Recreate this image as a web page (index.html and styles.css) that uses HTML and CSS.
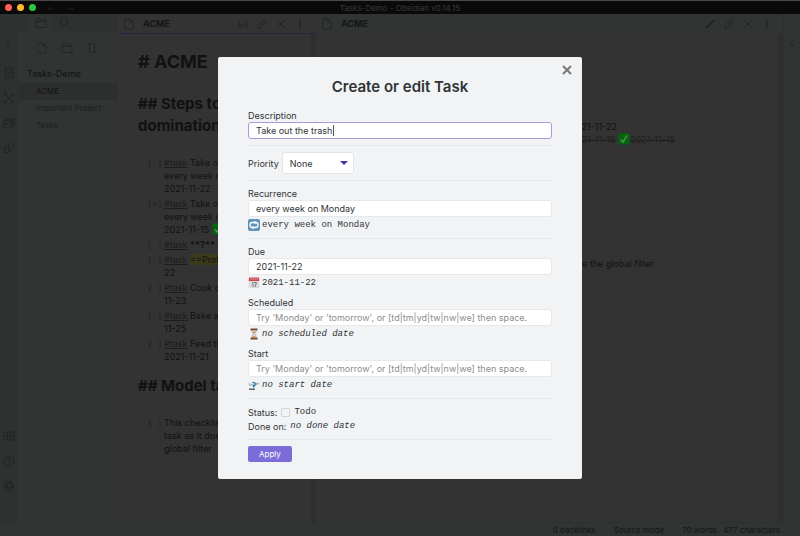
FILE: index.html
```html
<!DOCTYPE html>
<html lang="en">
  <head>
    <meta charset="UTF-8" />
    <meta name="viewport" content="width=device-width, initial-scale=1.0" />
    <title>Tasks-Demo - Obsidian v0.14.15</title>
    <link rel="stylesheet" href="styles.css">
  </head>
  <body>
    <!-- Shared icon shapes -->
    <svg class="sprite" aria-hidden="true">
      <symbol id="i-file" viewBox="0 0 12 12"><path d="M2 1h5l3 3v7H2zM7 1v3h3" /></symbol>
      <symbol id="i-folder" viewBox="0 0 12 12"><path d="M1 10.5v-9h3.5l1 1.5H11v7.500zM1 4.500h10" /></symbol>
      <symbol id="i-search" viewBox="0 0 12 12"><circle cx="5" cy="5" r="3.5" /><path d="M7.500 7.500L11 11" /></symbol>
      <symbol id="i-sort" viewBox="0 0 12 12"><path d="M3.500 11V1M1.500 3l2-2 2 2M8.500 1v10M6.500 9l2 2 2-2" /></symbol>
      <symbol id="i-glasses" viewBox="0 0 12 12"><path d="M1.500 7l1.500-4M10.500 7L9 3M5 7.500q1-1 2 0" /><circle cx="3" cy="8" r="1.800" /><circle cx="9" cy="8" r="1.800" /></symbol>
      <symbol id="i-pencil" viewBox="0 0 12 12"><path d="M2 10l.7-1.800L9.500 2l.7.7L4 9.300z" fill="currentColor" /></symbol>
      <symbol id="i-link" viewBox="0 0 12 12"><path d="M5 7l3-3M6 3l2-1.500q2-.5 2.500 1.500L8.500 6.500 6.500 7M6 9l-2 1.500q-2 .5-2.500-1.500L3.500 5.500 5.500 5" /></symbol>
      <symbol id="i-close" viewBox="0 0 12 12"><path d="M2 2l8 8M10 2l-8 8" /></symbol>
      <symbol id="i-dots" viewBox="0 0 12 12"><path d="M6 1.500v2M6 5v2M6 8.500v2" stroke-width="1.800" /></symbol>
      <symbol id="i-chevron" viewBox="0 0 12 12"><path d="M8 1.500L3.500 6 8 10.500" /></symbol>
      <symbol id="i-switch" viewBox="0 0 12 12"><path d="M2 1h8v10H2zM4 3.500h6M4 6h6M4 8.500h6M1 3.500h2M1 8.500h2" /></symbol>
      <symbol id="i-graph" viewBox="0 0 12 12"><path d="M2 2l4 4 4-3M6 6l-4 4M6 6l4 4" /><circle cx="2" cy="2" r="1" /><circle cx="10" cy="3" r="1" /><circle cx="2" cy="10" r="1" /><circle cx="10" cy="10" r="1" /></symbol>
      <symbol id="i-cards" viewBox="0 0 12 12"><path d="M1 4h8v7H1zM3 4V2h8v6.500H9M1 6.500h8" /></symbol>
      <symbol id="i-dice" viewBox="0 0 12 12"><path d="M1 5l5-1 1 6-5 1zM5 3.500L8 1l3 3-3.500 4M3.500 6.500v2M5.500 6v2" /></symbol>
      <symbol id="i-vault" viewBox="0 0 12 12"><path d="M1 2h10v8H1zM4.500 2v8M7.500 2v8M1 6h10" /></symbol>
      <symbol id="i-help" viewBox="0 0 12 12"><circle cx="6" cy="6" r="5" /><path d="M4.500 4.800q0-1.500 1.500-1.500t1.500 1.300Q7.500 5.500 6 6.300V7M6 8.300v1" /></symbol>
      <symbol id="i-gear" viewBox="0 0 12 12"><circle cx="6" cy="6" r="4" stroke-width="2" stroke-dasharray="2.200 1" /><circle cx="6" cy="6" r="2" /></symbol>
      <symbol id="i-done" viewBox="0 0 12 12"><rect x=".5" y=".5" width="11" height="11" rx="1" fill="#05650d" stroke="none" /><path d="M3 6.500l2 2.500 4-6.500" stroke="#5e8b62" stroke-width="1.400" /></symbol>
    </svg>

    <div class="app">
      <header class="titlebar">
        <span class="light red"></span>
        <span class="light yellow"></span>
        <span class="light green"></span>
        <span class="nav">←</span>
        <span class="nav">→</span>
        <span class="window-title">Tasks-Demo - Obsidian v0.14.15</span>
      </header>

      <div class="workspace">
        <nav class="ribbon">
          <svg class="icon"><use href="#i-chevron" /></svg>
          <svg class="icon first"><use href="#i-switch" /></svg>
          <svg class="icon"><use href="#i-graph" /></svg>
          <svg class="icon"><use href="#i-cards" /></svg>
          <svg class="icon"><use href="#i-dice" /></svg>
          <svg class="icon bottom"><use href="#i-vault" /></svg>
          <svg class="icon"><use href="#i-help" /></svg>
          <svg class="icon"><use href="#i-gear" /></svg>
        </nav>

        <aside class="sidebar">
          <div class="tabs">
            <span class="tab active"><svg class="icon"><use href="#i-folder" /></svg></span>
            <span class="tab"><svg class="icon"><use href="#i-search" /></svg></span>
          </div>
          <div class="file-actions">
            <svg class="icon"><use href="#i-file" /></svg>
            <svg class="icon"><use href="#i-folder" /></svg>
            <svg class="icon"><use href="#i-sort" /></svg>
          </div>
          <div class="vault-name">Tasks-Demo</div>
          <ul class="files">
            <li class="active">ACME</li>
            <li>Important Project</li>
            <li>Tasks</li>
          </ul>
        </aside>

        <section class="pane source focused">
          <div class="pane-header">
            <svg class="icon"><use href="#i-file" /></svg>
            <span class="pane-title">ACME</span>
            <svg class="icon"><use href="#i-glasses" /></svg>
            <svg class="icon"><use href="#i-link" /></svg>
            <svg class="icon"><use href="#i-close" /></svg>
            <svg class="icon"><use href="#i-dots" /></svg>
          </div>
          <div class="pane-body">
            <h1># ACME</h1>
            <h2>## Steps to<br>domination</h2>
            <ul class="tasks">
              <li><code>- [ ]</code><span><a href="#task">#task</a> Take out<br>every week on<br>2021-11-22</span></li>
              <li><code>- [x]</code><span><a href="#task">#task</a> Take out<br>every week on<br>2021-11-15 <svg class="done"><use href="#i-done" /></svg></span></li>
              <li><code>- [ ]</code><span><a href="#task">#task</a> <b>**?**</b></span></li>
              <li><code>- [ ]</code><span><a href="#task">#task</a> <mark>==Profit==</mark><br>22</span></li>
              <li><code>- [ ]</code><span><a href="#task">#task</a> Cook dinner<br>11-23</span></li>
              <li><code>- [ ]</code><span><a href="#task">#task</a> Bake a cake<br>11-25</span></li>
              <li><code>- [ ]</code><span><a href="#task">#task</a> Feed the cat<br>2021-11-21</span></li>
            </ul>
            <h2>## Model tasks</h2>
            <ul class="tasks">
              <li><code>- [ ]</code><span>This checklist<br>task as it does<br>global filter</span></li>
            </ul>
          </div>
        </section>

        <section class="pane preview">
          <div class="pane-header">
            <svg class="icon"><use href="#i-file" /></svg>
            <span class="pane-title">ACME</span>
            <svg class="icon"><use href="#i-pencil" /></svg>
            <svg class="icon"><use href="#i-link" /></svg>
            <svg class="icon"><use href="#i-close" /></svg>
            <svg class="icon"><use href="#i-dots" /></svg>
          </div>
          <div class="pane-body">
            <p>#task Take out the trash, every week on Monday, 2021-11-22</p>
            <p class="completed"><s>#task Take out the trash, every week on Monday, 2021-11-15</s> <svg class="done"><use href="#i-done" /></svg><s>2021-11-15</s></p>
            <p class="note">This checklist item is not a task, as it does not include the global filter</p>
          </div>
        </section>

        <nav class="ribbon right">
          <svg class="icon"><use href="#i-chevron" /></svg>
        </nav>
      </div>

      <footer class="status-bar">
        <span>0 backlinks</span>
        <span>Source mode</span>
        <span class="counts"><span>70 words</span><span>477 characters</span></span>
      </footer>
    </div>

    <div class="modal-container">
      <form class="modal" role="dialog" aria-labelledby="modalTitle">
        <button type="button" class="modal-close" aria-label="Close">
          <svg class="icon"><use href="#i-close" /></svg>
        </button>
        <h2 class="modal-title" id="modalTitle">Create or edit Task</h2>

        <div class="field">
          <label for="description">Description</label>
          <div class="text-box">
            <input type="text" id="description" class="focused" value="Take out the trash" />
            <span class="caret"></span>
          </div>
        </div>
        <hr />
        <div class="inline-field">
          <label for="priority">Priority</label>
          <span class="dropdown">
            <select id="priority">
              <option>None</option>
              <option>Low</option>
              <option>Medium</option>
              <option>High</option>
            </select>
          </span>
        </div>
        <hr />
        <div class="field">
          <label for="recurrence">Recurrence</label>
          <input type="text" id="recurrence" value="every week on Monday" />
          <div class="parsed">
            <svg class="emoji" viewBox="0 0 12 12">
              <rect width="12" height="12" rx="2" fill="#5f93b8" />
              <path d="M8 3.500H4Q2 3.500 2 6t2 2.500M4 8.500h4q2 0 2-2.500T8 3.500" fill="none" stroke="#fff" stroke-width="1.300" />
              <path d="M6.500 1.800v3.400L9 3.500zM5.500 6.800v3.400L3 8.500z" fill="#fff" />
            </svg>
            <code>every week on Monday</code>
          </div>
        </div>
        <hr />
        <div class="field">
          <label for="due">Due</label>
          <input type="text" id="due" value="2021-11-22" />
          <div class="parsed">
            <svg class="emoji" viewBox="0 0 12 12">
              <path d="M1 1h10l.5 10H.5z" fill="#dcdadb" />
              <path d="M1 .5h10l.3 3.500H.7z" fill="#cf4550" />
              <path d="M3 1v2M5 1v2M7 1v2M9 1v2" stroke="#f0b9bd" stroke-width=".6" />
              <path d="M4 6l1-.7V10M6 5.500h2.500L7 10" fill="none" stroke="#77787c" />
            </svg>
            <code>2021-11-22</code>
          </div>
        </div>
        <div class="field">
          <label for="scheduled">Scheduled</label>
          <input type="text" id="scheduled" placeholder="Try 'Monday' or 'tomorrow', or [td|tm|yd|tw|nw|we] then space." />
          <div class="parsed">
            <svg class="emoji" viewBox="0 0 12 12">
              <path d="M3.500 2h5q0 2.500-1.800 4Q8.500 7.500 8.500 10h-5q0-2.500 1.800-4Q3.500 4.500 3.500 2z" fill="#d9dde0" stroke="#9a8c86" stroke-width=".5" />
              <path d="M4.200 3.500h3.600L6 6zM4 10q.5-2 2-2.500 1.500.5 2 2.500z" fill="#d69a55" />
              <path d="M2.500.5h7v1.700h-7zM2.500 9.800h7v1.700h-7z" fill="#7b4535" />
            </svg>
            <code><em>no scheduled date</em></code>
          </div>
        </div>
        <div class="field">
          <label for="start">Start</label>
          <input type="text" id="start" placeholder="Try 'Monday' or 'tomorrow', or [td|tm|yd|tw|nw|we] then space." />
          <div class="parsed">
            <svg class="emoji" viewBox="0 0 12 12">
              <path d="M0 4.500l1.500-.2L3 5.500l7-2q1.700 0 1.500 1Q9 6.700 3 7.200 1 7 0 4.500z" fill="#a9bfce" />
              <path d="M3.500 3.200l1.500-.4 4 1.500-2 .7zM5 6l3.500-1L6 8.500l-1 .2z" fill="#347aa6" />
              <path d="M1 9.500h6v1.500H1z" fill="#5f6265" />
            </svg>
            <code><em>no start date</em></code>
          </div>
        </div>
        <hr />
        <div class="status-line">
          <label for="status">Status:</label>
          <input type="checkbox" id="status" />
          <code>Todo</code>
        </div>
        <div class="status-line">
          <span>Done on:</span>
          <code><em>no done date</em></code>
        </div>
        <hr />
        <button type="submit" class="apply">Apply</button>
      </form>
    </div>
  </body>
</html>
```
FILE: styles.css
```css
* {
  box-sizing: border-box;
}

body {
  margin: 0;
  font-family: Inter, "Liberation Sans", sans-serif;
  font-size: 9px;
  background-color: #303433;
  color: #111;
}

ul {
  list-style: none;
  margin: 0;
  padding: 0;
}

code {
  font-family: "Liberation Mono", monospace;
}

.sprite {
  position: absolute;
  width: 0;
  height: 0;
}

.icon {
  flex: none;
  width: 12px;
  height: 12px;
  fill: none;
  stroke: currentColor;
  stroke-width: 1;
}

.done {
  width: 12px;
  height: 12px;
  fill: none;
  vertical-align: -2px;
}

/* Window */
.app {
  display: flex;
  flex-direction: column;
  height: 100vh;
  overflow: hidden;
}

.titlebar {
  position: relative;
  display: flex;
  align-items: center;
  gap: 5px;
  height: 14px;
  padding-left: 5px;
  background-color: #0a0a0a;
  border-top: 1px solid #4a4a4a;
  color: #1c1c1c;
}

.light {
  width: 7px;
  height: 7px;
  border-radius: 50%;
}

.red {
  background-color: #fe5f57;
}

.yellow {
  background-color: #febb2e;
}

.green {
  background-color: #29c840;
}

.nav {
  margin-left: 6px;
}

.window-title {
  position: absolute;
  left: 0;
  right: 0;
  text-align: center;
  font-size: 8px;
  color: #383838;
}

.workspace {
  display: flex;
  flex: 1;
  min-height: 0;
}

/* Ribbons */
.ribbon {
  display: flex;
  flex-direction: column;
  gap: 13px;
  flex: none;
  width: 18px;
  padding: 23px 3px 30px;
  background-color: #2f3130;
  color: #222423;
}

.ribbon .first {
  margin-top: 5px;
}

.ribbon .bottom {
  margin-top: auto;
}

.ribbon.right {
  width: 17px;
  background-color: #303433;
  border-left: 1px solid #2b2f2e;
}

/* Sidebar */
.sidebar {
  flex: none;
  width: 100px;
  background-color: #303433;
}

.tabs {
  display: flex;
  height: 18px;
  padding-left: 11px;
  background-color: #2f3130;
  color: #232524;
}

.tab {
  display: flex;
  align-items: center;
  justify-content: center;
  width: 24px;
}

.tab.active {
  background-color: #303433;
}

.file-actions {
  display: flex;
  gap: 13px;
  padding: 10px 18px;
  color: #222625;
}

.vault-name {
  padding: 3px 9px;
  line-height: 13px;
}

.files li {
  padding: 0 18px;
  font-size: 8px;
  line-height: 17px;
  white-space: nowrap;
  color: #1c201f;
}

.files .active {
  background-color: #2d2f2e;
  color: #111;
}

/* Panes */
.pane {
  display: flex;
  flex-direction: column;
  min-width: 0;
  overflow: hidden;
  background-color: #333;
}

.source {
  flex: 198;
}

.preview {
  flex: 467;
}

.pane-header {
  display: flex;
  align-items: center;
  gap: 7px;
  height: 20px;
  padding: 0 10px 0 5px;
  background-color: #303433;
  border-bottom: 1px solid #2f3332;
  color: #222524;
}

.focused .pane-header {
  background-color: #333;
  border-bottom: 1px solid #25224a;
}

.pane-title {
  flex: 1;
  margin-left: 1px;
  font-weight: 700;
  color: #151515;
}

.pane-body {
  flex: 1;
  padding: 16px 15px 0 20px;
  border-right: 5px solid #2c2f2e;
  white-space: nowrap;
  overflow: hidden;
}

.pane-body h1 {
  margin: 0 0 19px;
  font-size: 18px;
  line-height: 24px;
}

.pane-body h2 {
  margin: 12px 0 19px;
  font-size: 15px;
  line-height: 22px;
}

.tasks li {
  display: grid;
  grid-template-columns: 26px 1fr;
  margin-bottom: 2px;
  line-height: 13px;
}

.tasks code {
  font-size: 8px;
  color: #202020;
}

.tasks a {
  color: #1c1c1c;
}

.tasks mark {
  background-color: #3b3b1c;
  color: #111;
}

.preview .pane-body {
  padding: 86px 0 0 43px;
}

.pane-body p {
  margin: 0;
  line-height: 13px;
}

.completed {
  color: #1f1f1f;
}

.pane-body .note {
  margin-top: 111px;
}

.status-bar {
  display: flex;
  justify-content: flex-end;
  gap: 18px;
  height: 14px;
  padding: 0 20px;
  border-top: 1px solid #2d3130;
  font-size: 8px;
  line-height: 14px;
  color: #151716;
}

.counts {
  display: flex;
  gap: 6px;
}

/* Task dialog */
.modal-container {
  position: fixed;
  inset: 0;
  display: flex;
  align-items: center;
  justify-content: center;
}

.modal {
  position: relative;
  width: 90%;
  max-width: 364px;
  padding: 20px 30px 17px;
  background-color: #f2f3f5;
  border-radius: 2px;
  color: #2e3338;
}

.modal-close {
  position: absolute;
  top: 6px;
  right: 8px;
  display: flex;
  padding: 1px;
  border: none;
  background: none;
  color: #777;
}

.modal-close .icon {
  stroke-width: 2;
}

.modal-title {
  margin: 0 0 12px;
  font-size: 15px;
  font-weight: 600;
  line-height: 20px;
  text-align: center;
}

.field {
  display: flex;
  flex-direction: column;
}

.field + .field {
  margin-top: 6px;
}

.field label {
  line-height: 13px;
}

.text-box {
  position: relative;
  display: flex;
}

.modal input[type="text"] {
  width: 100%;
  height: 17px;
  padding: 0 7px;
  border: 1px solid #e6e8ea;
  border-radius: 3px;
  background-color: #fff;
  color: #2e3338;
  font-family: inherit;
  font-size: 9px;
  outline: none;
}

.modal input::placeholder {
  color: #8b8d90;
}

.modal input.focused {
  border-color: #a59ddb;
}

.caret {
  position: absolute;
  top: 3px;
  left: 85px;
  width: 1px;
  height: 11px;
  background-color: #555;
}

.modal hr {
  margin: 6px 0;
  border: none;
  border-top: 1px solid #e6e8ea;
}

.inline-field {
  display: flex;
  align-items: center;
  gap: 3px;
}

.dropdown {
  position: relative;
}

.dropdown::after {
  content: "";
  position: absolute;
  top: 9px;
  right: 6px;
  border: 4px solid transparent;
  border-top: 4px solid #4b32a8;
  border-bottom: none;
}

.dropdown select {
  display: block;
  width: 72px;
  height: 22px;
  padding: 0 7px;
  appearance: none;
  border: 1px solid #e3e5e8;
  border-radius: 3px;
  background-color: #fff;
  color: #2e3338;
  font-family: inherit;
  font-size: 9px;
}

.parsed {
  display: flex;
  align-items: center;
  gap: 2px;
  height: 15px;
}

.modal code {
  font-size: 9px;
}

.emoji {
  width: 12px;
  height: 12px;
}

.status-line {
  display: flex;
  align-items: center;
  gap: 4px;
  height: 14px;
}

.status-line input {
  width: 9px;
  height: 9px;
  margin: 0;
  appearance: none;
  border: 1px solid #d3d5d8;
  border-radius: 1px;
}

.apply {
  display: block;
  height: 16px;
  padding: 0 11px;
  border: none;
  border-radius: 2px;
  background-color: #7b6cd9;
  color: #fff;
  font-family: inherit;
  font-size: 8px;
}
```
